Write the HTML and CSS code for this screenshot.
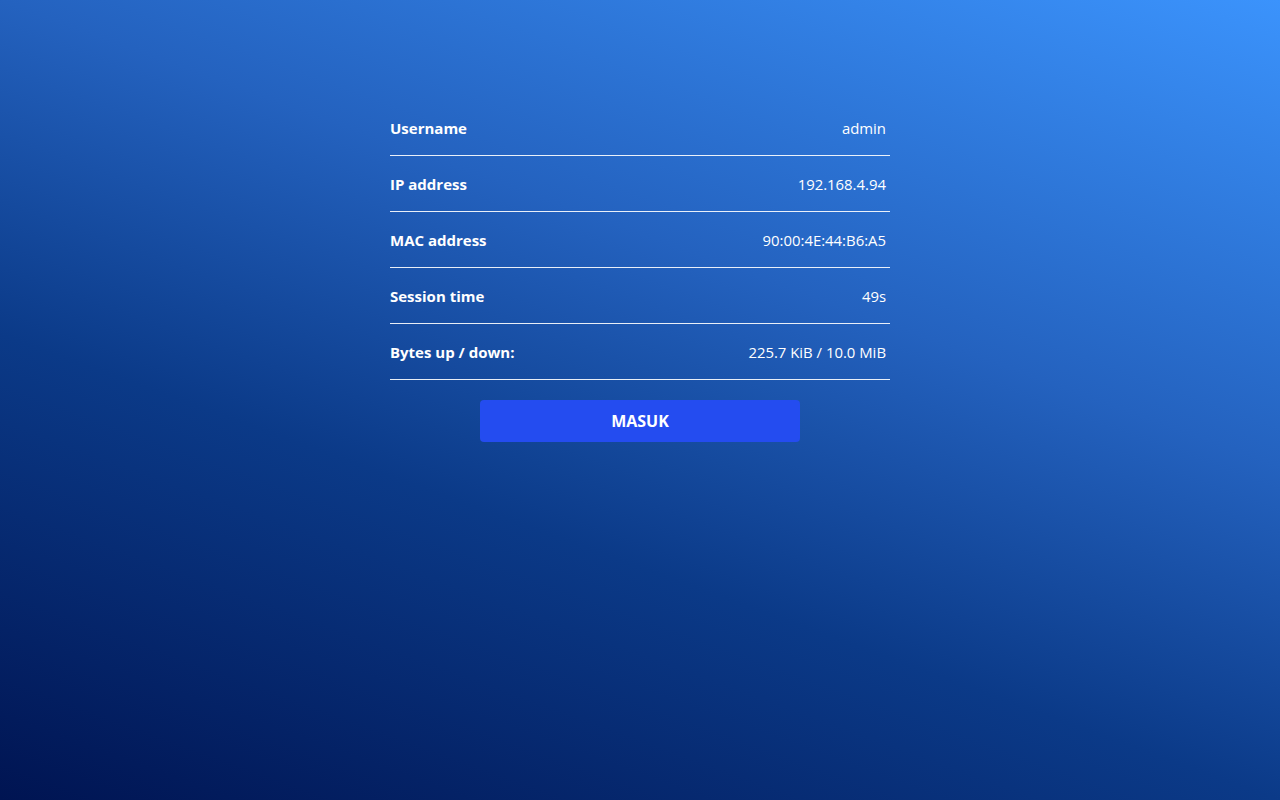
FILE: index.html
```html
<!DOCTYPE html>
<html>
<head>
<meta charset="utf-8">
<title>Status</title>
<link rel="stylesheet" href="styles.css">
</head>
<body>
<main class="panel">
  <div class="row"><span class="label">Username</span><span class="value">admin</span></div>
  <div class="row"><span class="label">IP address</span><span class="value">192.168.4.94</span></div>
  <div class="row"><span class="label">MAC address</span><span class="value">90:00:4E:44:B6:A5</span></div>
  <div class="row"><span class="label">Session time</span><span class="value">49s</span></div>
  <div class="row"><span class="label">Bytes up / down:</span><span class="value">225.7 KiB / 10.0 MiB</span></div>
  <button class="btn">MASUK</button>
</main>
</body>
</html>
```

FILE: styles.css
```css
html, body {
  margin: 0;
  height: 100%;
}
body {
  background: linear-gradient(20deg, #001452 0%, #0b3a88 36.8%, #2462bf 63.2%, #3b93fc 100%);
  font-family: "Open Sans", "Noto Sans", sans-serif;
  font-size: 15px;
  color: #fff;
}
.panel {
  width: 500px;
  margin: 0 auto;
  padding-top: 100px;
  display: flex;
  flex-direction: column;
}
.row {
  height: 55px;
  display: flex;
  justify-content: space-between;
  align-items: center;
  border-bottom: 1px solid rgba(255, 255, 255, 0.9);
}
.label {
  font-weight: 700;
  font-size: 15px;
}
.value {
  padding-right: 4px;
  font-size: 14.9px;
}
.btn {
  margin: 20px auto 0;
  width: 320px;
  height: 42px;
  border: none;
  border-radius: 4px;
  background: #244cf0;
  color: #fff;
  font-family: inherit;
  font-size: 16px;
  font-weight: 700;
}
```
